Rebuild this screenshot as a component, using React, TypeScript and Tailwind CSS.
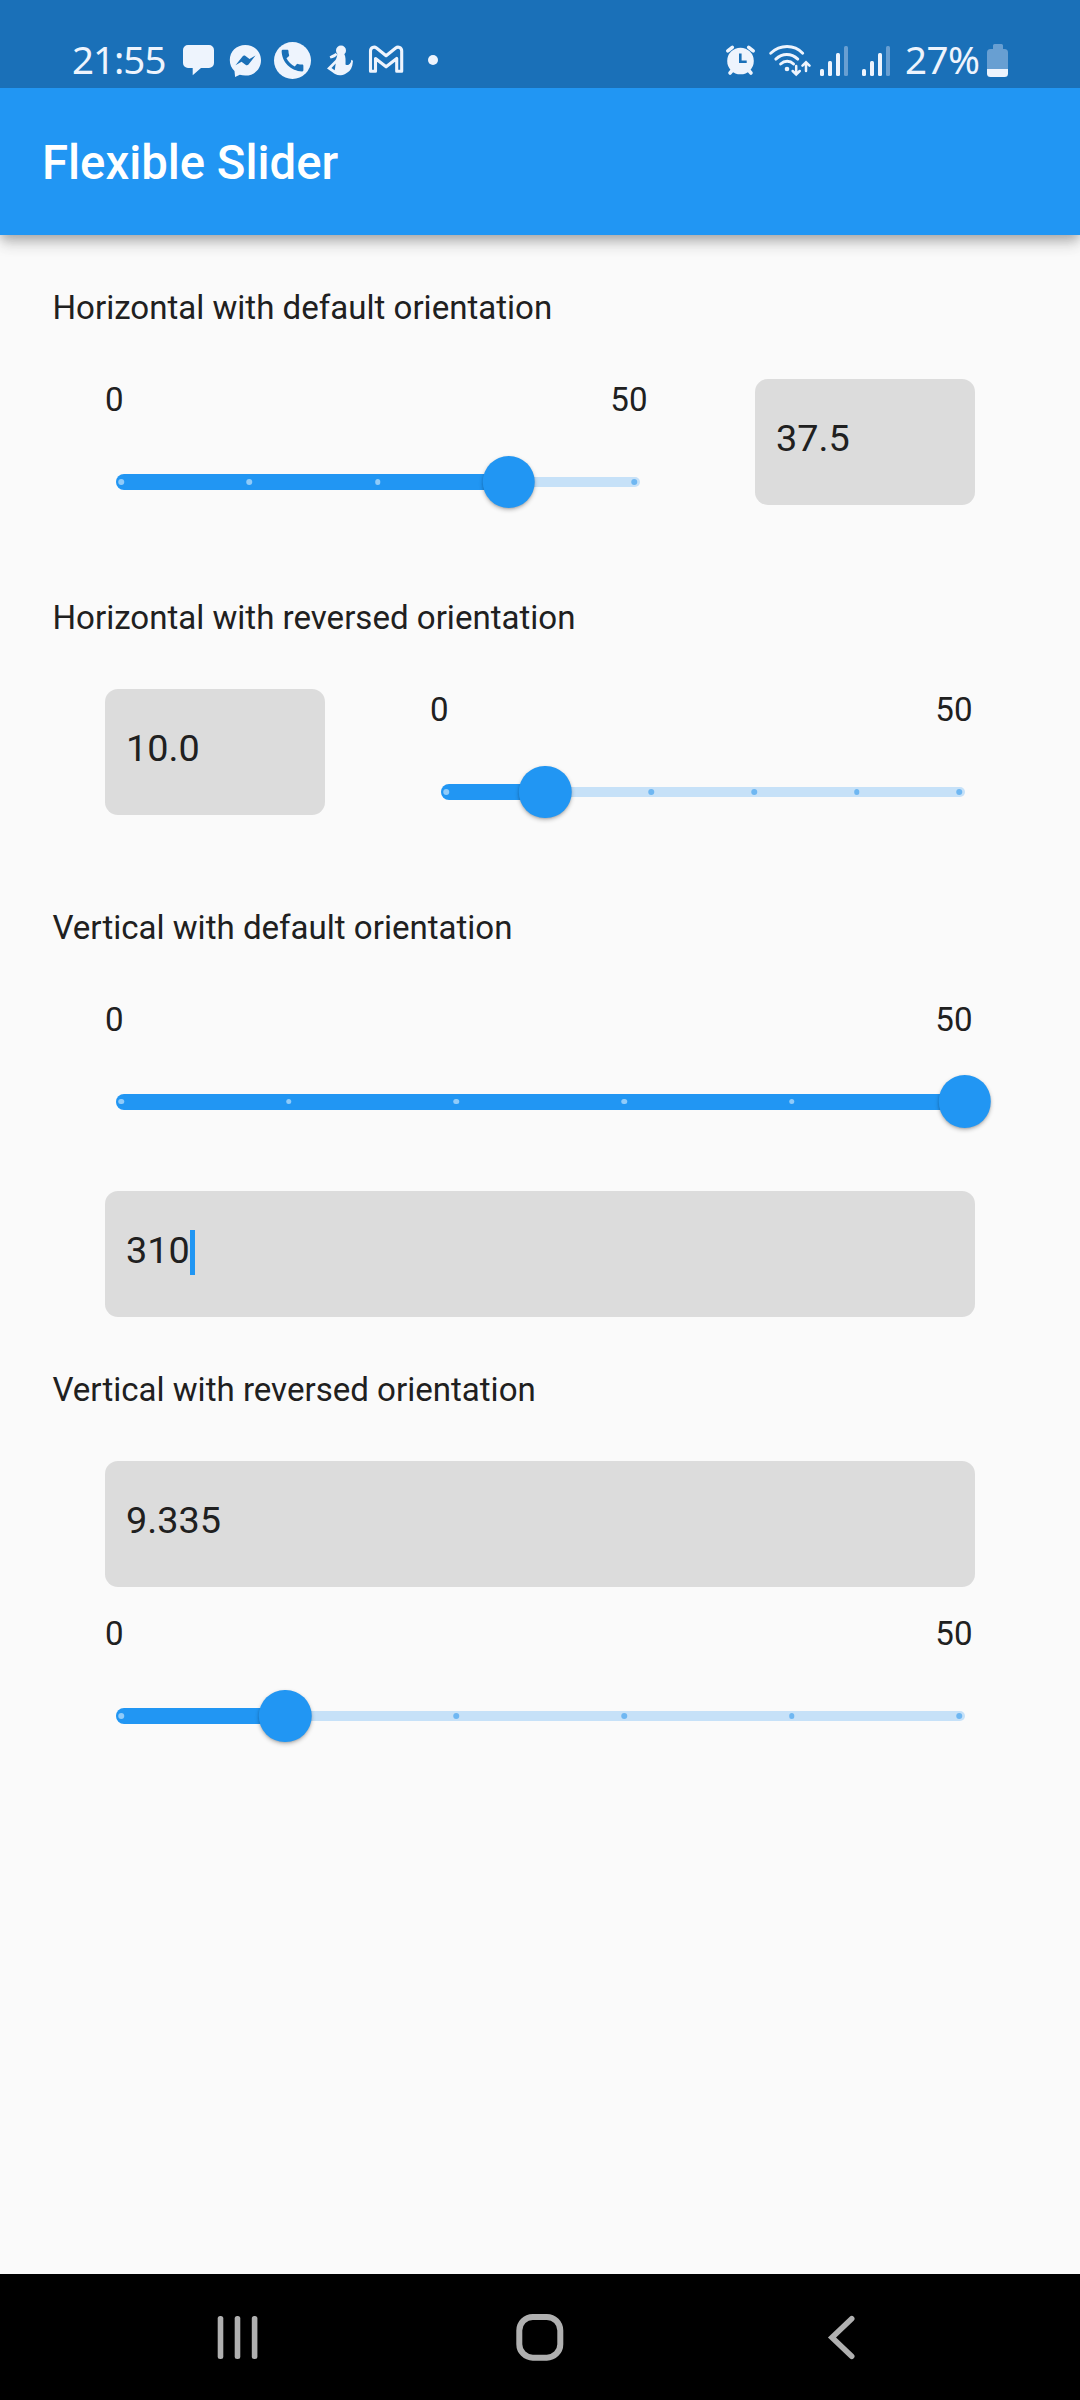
import type { ReactNode } from "react";
import { MdCall } from "react-icons/md";

const INK = "#eef4fd";

function StatusBar() {
  return (
    <div className="flex h-[88px] items-start bg-[#1a70b8] text-[#eef4fd]">
      <div className="mt-[39px] ml-[72px] w-[111px] font-['Noto_Sans','Open_Sans',sans-serif] text-[38.500px] leading-[40px] font-normal tracking-[-1px] whitespace-nowrap">
        21:55
      </div>
      <svg className="mt-[44px] h-[32px] w-[31px]" viewBox="183 44 31 32" fill={INK}>
        <path d="M188 45h21a5 5 0 0 1 5 5v13a5 5 0 0 1-5 5h-8l-8.3 7.2V68H188a5 5 0 0 1-5-5V50a5 5 0 0 1 5-5z" />
      </svg>
      <svg className="mt-[42px] ml-[14px] h-[36px] w-[34px]" viewBox="228 42 34 36">
        <path
          fill={INK}
          d="M245.3 45c-8.900 0-15.500 6.600-15.500 15 0 4.500 1.800 8.400 4.700 11l.6 6 4.700-2.200c1.700.5 3.500.8 5.500.8 9 0 15.700-6.700 15.700-15.400S254.300 45 245.300 45z"
        />
        <path fill="#1a70b8" d="M235.500 65.300l7-8.900c.8-1 2-1.100 3-.4l4 3 6-3.600-7 9c-.8 1-2 1.100-3 .3l-4-3z" />
      </svg>
      <div className="mt-[42px] ml-[12px] flex size-[37px] items-center justify-center rounded-full bg-[#eef4fd]">
        <MdCall className="size-[29px] text-[#1a70b8]" />
      </div>
      <svg className="mt-[44px] ml-[14px] h-[32px] w-[30px]" viewBox="325 44 30 32" fill={INK}>
        <circle cx="341" cy="50.500" r="5" />
        <path d="M329.600 56.500c2-2 4-1.500 6-3.500l2 1.500c-1.600 2.500-4 3.500-7 4z" />
        <path d="M337.500 53.500l6.500 0c2 3 1.500 7 1.500 11 1.500.8 3 .8 4.300-.8l1.200-1.800.2-2.200 1.800 1-.3 2.200-.4 2.500c-1.400 4.500-3.300 6.300-5.300 7.300-2 1.500-3.700 2.400-6 2.500-4.500.3-6-1-8.500-2.900l-5.500-3.800 8.500-8.500c1-1.300 1.500-4 2-6.500z" />
        <path d="M335.700 63.500l-4.200 4.500 3.200 2.300z" fill="#1a70b8" />
      </svg>
      <svg className="mt-[44px] ml-[13px] h-[32px] w-[36px]" viewBox="368 44 36 32" fill="none">
        <path
          stroke={INK}
          strokeWidth="3.100"
          strokeLinejoin="round"
          d="M370.500 51v20.300h5V58.500l10.600 8.300 10.600-8.300v12.800h5V51c0-3.600-3.700-4.700-6-3l-9.600 7.700-9.600-7.700c-2.300-1.700-6-.6-6 3z"
        />
      </svg>
      <span className="mt-[55px] ml-[24px] size-[10px] rounded-full bg-[#eef4fd]" />

      <svg className="mt-[44px] ml-[287px] h-[32px] w-[31px]" viewBox="725 44 31 32">
        <circle cx="740.500" cy="61" r="13.300" fill={INK} />
        <path
          stroke={INK}
          strokeWidth="3.600"
          strokeLinecap="round"
          fill="none"
          d="M727.800 50.800l4.500-3.500M753.200 50.800l-4.500-3.500M730 73l3-3.500M751 73l-3-3.500"
        />
        <path stroke="#1a70b8" strokeWidth="2.600" fill="none" d="M740.300 53.500v8.300h6.400" />
      </svg>
      <svg
        className="mt-[43px] ml-[12px] h-[34px] w-[43px]"
        viewBox="768 43 43 34"
        fill="none"
        stroke={INK}
        strokeWidth="2.900"
        strokeLinecap="round"
      >
        <path d="M770.700 53.300c9.500-9 23.500-9 32 0M775.800 59.100c6.500-6.200 15.500-6.200 22 0M780.600 64c4-3.800 9.300-3.700 13 0" />
        <circle cx="787" cy="69" r="2.300" fill={INK} stroke="none" />
        <path strokeWidth="2.500" d="M796.200 66v8.300m-3.500-3.300l3.500 3.500 3.500-3.500M806 71v-8.600m-3.500 3.300l3.500-3.500 3.500 3.500" />
      </svg>
      <Signal className="ml-[9px]" />
      <Signal className="ml-[14px]" />
      <div className="mt-[39px] ml-[15px] w-[82px] font-['Noto_Sans','Open_Sans',sans-serif] text-[38.500px] leading-[40px] font-normal tracking-[-0.500px] whitespace-nowrap">
        27%
      </div>
      <svg className="mt-[43px] h-[35px] w-[22px]" viewBox="987 43 22 35">
        <path
          fill="#689fd2"
          d="M994.500 44h7a1.500 1.500 0 0 1 1.500 1.500V49h1.500a3.500 3.500 0 0 1 3.500 3.500V69h-21V52.500a3.500 3.500 0 0 1 3.500-3.500h2.500v-3.500a1.500 1.500 0 0 1 1.500-1.500z"
        />
        <path fill={INK} d="M987 69h21v4.500a3.500 3.500 0 0 1-3.500 3.500h-14a3.500 3.500 0 0 1-3.500-3.500z" />
      </svg>
    </div>
  );
}

function Signal({ className }: { className: string }) {
  return (
    <div className={`mt-[46px] flex h-[29.500px] w-[28px] items-end justify-between ${className}`}>
      <span className="h-[7px] w-[4px] rounded-[1.500px] bg-[#eef4fd]" />
      <span className="h-[15px] w-[4px] rounded-[1.500px] bg-[#eef4fd]" />
      <span className="h-[23px] w-[4px] rounded-[1.500px] bg-[#eef4fd]" />
      <span className="h-[29.500px] w-[4px] rounded-[1.500px] bg-[#689fd2]" />
    </div>
  );
}

function Heading({ children }: { children: ReactNode }) {
  return (
    <h2 className="ml-[52.500px] h-[40px] pt-px text-[33.075px] leading-[40px] whitespace-nowrap">{children}</h2>
  );
}

type SliderProps = { fraction: number; divisions: number };

function Slider({ fraction, divisions }: SliderProps) {
  const percent = `${fraction * 100}%`;
  const ticks = Array.from({ length: divisions + 1 }, (_, i) => i / divisions);
  return (
    <div className="flex h-[126px] flex-1 flex-col">
      <div className="flex h-[40px] justify-between pt-px pr-[2.500px] text-[33.075px] leading-[40px]">
        <span>0</span>
        <span>50</span>
      </div>
      <div className="relative mx-[10.500px] mt-[37px] h-[52px]">
        <div className="absolute inset-x-0 top-[20.700px] h-[10.500px] rounded-full bg-[#c6e1f8]" />
        <div className="absolute top-[18px] left-0 h-[16px] rounded-l-full bg-[#2196f3]" style={{ width: percent }} />
        <div className="absolute top-[23.200px] right-[5.250px] left-[5.700px] h-[5px]">
          {ticks.map((t) => (
            <span
              key={t}
              className={`absolute size-[5.500px] -translate-x-1/2 rounded-full ${t <= fraction ? "bg-[#90cbf9]" : "bg-[#6fb7f2]"}`}
              style={{ left: `${t * 100}%` }}
            />
          ))}
        </div>
        <div
          className="absolute -top-[0.500px] size-[52.500px] -translate-x-1/2 rounded-full bg-[#2196f3] shadow-[0_2px_4px_rgba(0,0,0,0.24),0_1px_2px_rgba(0,0,0,0.12)]"
          style={{ left: percent }}
        />
      </div>
    </div>
  );
}

function Field({ value, wide, focused }: { value: string; wide?: boolean; focused?: boolean }) {
  return (
    <div className={`flex h-[126px] items-start rounded-[13px] bg-[#dcdcdc] pl-[21px] ${wide ? "w-[870px]" : "w-[220px]"}`}>
      <span className="mt-[36px] text-[37.800px] leading-[46px]">{value}</span>
      {focused && <span className="mt-[39px] h-[45px] w-[5.500px] bg-[#2196f3]" />}
    </div>
  );
}

function NavBar() {
  return (
    <nav className="flex h-[126px] items-start bg-black">
      <svg className="mt-[40px] ml-[215px] h-[48px] w-[46px]" viewBox="215 2314 46 48" fill="#b0b0b0">
        <rect x="217.700" y="2316" width="5.600" height="43" rx="2.500" />
        <rect x="234.700" y="2316" width="5.600" height="43" rx="2.500" />
        <rect x="251.800" y="2316" width="5.600" height="43" rx="2.500" />
      </svg>
      <svg className="mt-[38px] ml-[254px] h-[50px] w-[50px]" viewBox="515 2312 50 50" fill="none">
        <rect x="519.300" y="2317" width="41" height="40.700" rx="13.500" stroke="#b0b0b0" strokeWidth="6" />
      </svg>
      <svg className="mt-[40px] ml-[262px] h-[48px] w-[32px]" viewBox="827 2314 32 48" fill="none">
        <path d="M851.700 2318.800L832 2337.500l19.700 18.700" stroke="#b0b0b0" strokeWidth="5.600" strokeLinecap="round" />
      </svg>
    </nav>
  );
}

export default function App() {
  return (
    <div className="flex h-[2400px] w-[1080px] flex-col overflow-hidden bg-[#fafafa] font-[Roboto,sans-serif] text-[#202020]">
      <header className="relative bg-[#2196f3] shadow-[0_5px_10px_-2px_rgba(0,0,0,0.22),0_10px_13px_0_rgba(0,0,0,0.12),0_2px_22px_0_rgba(0,0,0,0.08)]">
        <StatusBar />
        <div className="flex h-[147px] items-center pt-[2px] pl-[42px]">
          <h1 className="text-[47.250px] leading-[56px] font-medium text-white">Flexible Slider</h1>
        </div>
      </header>

      <main className="flex-1 pt-[52px]">
        <section className="h-[310px]">
          <Heading>Horizontal with default orientation</Heading>
          <div className="mx-[105px] mt-[52px] flex gap-[105px]">
            <Slider fraction={0.75} divisions={4} />
            <Field value="37.5" />
          </div>
        </section>
        <section className="h-[310px]">
          <Heading>Horizontal with reversed orientation</Heading>
          <div className="mx-[105px] mt-[52px] flex gap-[105px]">
            <Field value="10.0" />
            <Slider fraction={0.2} divisions={5} />
          </div>
        </section>
        <section className="h-[462px]">
          <Heading>Vertical with default orientation</Heading>
          <div className="mx-[105px] mt-[51.500px] flex flex-col gap-[66px]">
            <div className="flex h-[126px]">
              <Slider fraction={1} divisions={5} />
            </div>
            <Field value="310" wide focused />
          </div>
        </section>
        <section>
          <Heading>Vertical with reversed orientation</Heading>
          <div className="mx-[105px] mt-[52px]">
            <Field value="9.335" wide />
            <div className="mt-[26px] flex">
              <Slider fraction={0.2} divisions={5} />
            </div>
          </div>
        </section>
      </main>

      <NavBar />
    </div>
  );
}
